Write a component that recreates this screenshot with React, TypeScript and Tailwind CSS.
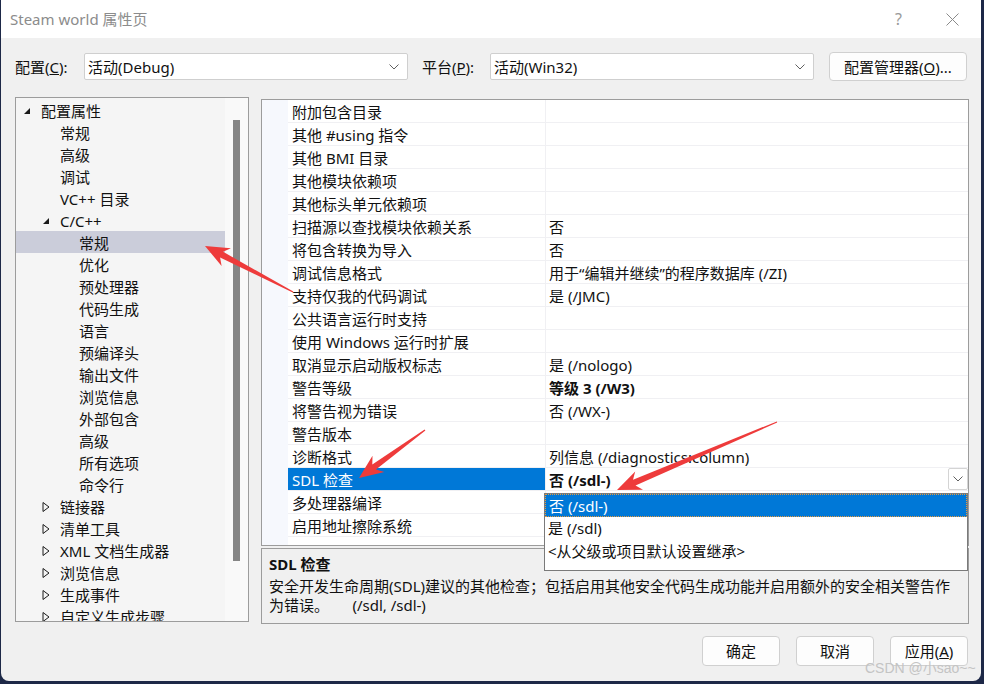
import React from "react";

type TreeItem = {
  label: string;
  level: number;
  kind: "open" | "closed" | "leaf";
  selected?: boolean;
};

const tree: TreeItem[] = [
  { label: "配置属性", level: 0, kind: "open" },
  { label: "常规", level: 1, kind: "leaf" },
  { label: "高级", level: 1, kind: "leaf" },
  { label: "调试", level: 1, kind: "leaf" },
  { label: "VC++ 目录", level: 1, kind: "leaf" },
  { label: "C/C++", level: 1, kind: "open" },
  { label: "常规", level: 2, kind: "leaf", selected: true },
  { label: "优化", level: 2, kind: "leaf" },
  { label: "预处理器", level: 2, kind: "leaf" },
  { label: "代码生成", level: 2, kind: "leaf" },
  { label: "语言", level: 2, kind: "leaf" },
  { label: "预编译头", level: 2, kind: "leaf" },
  { label: "输出文件", level: 2, kind: "leaf" },
  { label: "浏览信息", level: 2, kind: "leaf" },
  { label: "外部包含", level: 2, kind: "leaf" },
  { label: "高级", level: 2, kind: "leaf" },
  { label: "所有选项", level: 2, kind: "leaf" },
  { label: "命令行", level: 2, kind: "leaf" },
  { label: "链接器", level: 1, kind: "closed" },
  { label: "清单工具", level: 1, kind: "closed" },
  { label: "XML 文档生成器", level: 1, kind: "closed" },
  { label: "浏览信息", level: 1, kind: "closed" },
  { label: "生成事件", level: 1, kind: "closed" },
  { label: "自定义生成步骤", level: 1, kind: "closed" },
];

type Prop = { name: string; value?: string; bold?: boolean; selected?: boolean };

const props: Prop[] = [
  { name: "附加包含目录" },
  { name: "其他 #using 指令" },
  { name: "其他 BMI 目录" },
  { name: "其他模块依赖项" },
  { name: "其他标头单元依赖项" },
  { name: "扫描源以查找模块依赖关系", value: "否" },
  { name: "将包含转换为导入", value: "否" },
  { name: "调试信息格式", value: "用于“编辑并继续”的程序数据库 (/ZI)" },
  { name: "支持仅我的代码调试", value: "是 (/JMC)" },
  { name: "公共语言运行时支持" },
  { name: "使用 Windows 运行时扩展" },
  { name: "取消显示启动版权标志", value: "是 (/nologo)" },
  { name: "警告等级", value: "等级 3 (/W3)", bold: true },
  { name: "将警告视为错误", value: "否 (/WX-)" },
  { name: "警告版本" },
  { name: "诊断格式", value: "列信息 (/diagnostics:column)" },
  { name: "SDL 检查", value: "否 (/sdl-)", bold: true, selected: true },
  { name: "多处理器编译" },
  { name: "启用地址擦除系统" },
];

const font = { fontFamily: '"Noto Sans", "Noto Sans CJK SC", sans-serif' };

function Chevron({ className = "" }: { className?: string }) {
  return (
    <svg width="10" height="6" viewBox="0 0 10 6" className={className}>
      <path d="M0.5 0.5 L5 5 L9.5 0.5" fill="none" stroke="#606060" strokeWidth="1" />
    </svg>
  );
}

function TreeArrow({ kind }: { kind: TreeItem["kind"] }) {
  if (kind === "open")
    return (
      <svg width="8" height="8" viewBox="0 0 8 8">
        <path d="M7 1 L7 7 L1 7 Z" fill="#1a1a1a" />
      </svg>
    );
  if (kind === "closed")
    return (
      <svg width="8" height="10" viewBox="0 0 8 10">
        <path d="M1 0.5 L7 5 L1 9.5 Z" fill="none" stroke="#1a1a1a" strokeWidth="1" />
      </svg>
    );
  return null;
}

function Combo({ text }: { text: string }) {
  return (
    <div className="flex h-[27px] w-[324px] items-center justify-between rounded-[2px] border border-[#cfcfcf] bg-white pl-[3px] pr-[8px]">
      <span className="pt-[1px]">{text}</span>
      <Chevron />
    </div>
  );
}

// 红色标注箭头：尾部细、头部三角
function arrowPoints(x1: number, y1: number, x2: number, y2: number) {
  const len = Math.hypot(x2 - x1, y2 - y1);
  const dx = (x2 - x1) / len;
  const dy = (y2 - y1) / len;
  const nx = -dy;
  const ny = dx;
  const H = 24;
  const W = 10;
  const neck = [x2 - dx * H * 0.78, y2 - dy * H * 0.78];
  const wing = [x2 - dx * H, y2 - dy * H];
  const pts = [
    [x1 + nx * 0.6, y1 + ny * 0.6],
    [neck[0] + nx * 3.2, neck[1] + ny * 3.2],
    [wing[0] + nx * W, wing[1] + ny * W],
    [x2, y2],
    [wing[0] - nx * W, wing[1] - ny * W],
    [neck[0] - nx * 3.2, neck[1] - ny * 3.2],
    [x1 - nx * 0.6, y1 - ny * 0.6],
  ];
  return pts.map((p) => p.map((v) => v.toFixed(1)).join(",")).join(" ");
}

export default function App() {
  return (
    <div className="relative h-[684px] w-[984px] overflow-hidden bg-[#1d2847] text-[15px] text-[#111]" style={font}>
      <div className="ml-[1px] flex h-[681px] w-[980px] flex-col rounded-b-[8px] bg-[#f0f0f0]">
        {/* 标题栏 */}
        <div className="flex h-[38px] items-center justify-between bg-white pl-[9px] pr-[22px] text-[#8c8c8c]">
          <span>Steam world 属性页</span>
          <div className="flex items-center gap-[44px] text-[16px] text-[#9a9a9a]">
            <span>?</span>
            <svg width="13" height="13" viewBox="0 0 13 13">
              <path d="M0.5 0.5 L12.5 12.5 M12.5 0.5 L0.5 12.5" stroke="#8a8a8a" strokeWidth="1" />
            </svg>
          </div>
        </div>

        {/* 配置 / 平台 */}
        <div className="mt-[14px] flex h-[29px] items-center pl-[14px]">
          <span className="w-[69px] pt-[1px]">
            配置(<u>C</u>):
          </span>
          <Combo text="活动(Debug)" />
          <span className="ml-[14px] w-[68px] pt-[1px]">
            平台(<u>P</u>):
          </span>
          <Combo text="活动(Win32)" />
          <div className="ml-[15px] flex h-[29px] w-[138px] items-center justify-center rounded-[4px] border border-[#d0d0d0] bg-[#fdfdfd] pt-[1px]">
            配置管理器(<u>O</u>)...
          </div>
        </div>

        <div className="mt-[16px] flex">
          {/* 左侧树 */}
          <div className="ml-[14px] flex h-[525px] w-[234px] overflow-hidden border border-[#9c9c9c] bg-[#f5f5f5]">
            <div className="w-[209px] pt-[1px]">
              {tree.map((t, i) => (
                <div
                  key={i}
                  className={`flex h-[22px] items-center pt-[2px] ${t.selected ? "bg-[#cbcdda]" : ""}`}
                  style={{ paddingLeft: 7 + 19 * t.level }}
                >
                  <span className="flex w-[18px] items-center">
                    <TreeArrow kind={t.kind} />
                  </span>
                  <span className="whitespace-nowrap">{t.label}</span>
                </div>
              ))}
            </div>
            <div className="flex w-[23px] justify-center bg-[#f9f9f9] pt-[22px]">
              <div className="h-[441px] w-[7px] bg-[#858585]" />
            </div>
          </div>

          <div className="ml-[12px] flex flex-col">
            {/* 属性网格 */}
            <div className="mt-[2px] flex h-[447px] w-[708px] border border-[#9c9c9c] bg-white">
              <div className="w-[26px] bg-[#f6f8fd]" />
              <div className="flex-1">
                {props.map((p, i) => (
                  <div key={i} className="flex h-[23px] border-b border-[#f0f0f3]">
                    <div
                      className={`flex w-[258px] items-center border-r border-[#f0f0f3] pl-[4px] pt-[2px] ${
                        p.selected ? "bg-[#0078d7] text-white" : ""
                      }`}
                    >
                      {p.name}
                    </div>
                    <div className="flex flex-1 items-center justify-between pl-[3px]">
                      <span className={`pt-[2px] ${p.bold ? "font-bold" : ""}`}>{p.value ?? ""}</span>
                      {p.selected && (
                        <div className="flex h-[22px] w-[20px] items-center justify-center rounded-[2px] border border-[#d4d4d4] bg-white">
                          <Chevron />
                        </div>
                      )}
                    </div>
                  </div>
                ))}
              </div>
            </div>

            {/* 说明 */}
            <div className="mt-[2px] h-[76px] w-[708px] border border-[#9c9c9c] px-[7px] pt-[6px] leading-[19px]">
              <div className="font-bold">SDL 检查</div>
              <div className="mt-[3px]">
                安全开发生命周期(SDL)建议的其他检查；包括启用其他安全代码生成功能并启用额外的安全相关警告作
                <br />
                为错误。&nbsp;&nbsp;&nbsp;&nbsp;&nbsp;&nbsp;(/sdl, /sdl-)
              </div>
            </div>
          </div>
        </div>

        {/* 底部按钮 */}
        <div className="mt-[12px] flex justify-end gap-[16px] pr-[13px]">
          {["确定", "取消"].map((b) => (
            <div key={b} className="flex h-[30px] w-[78px] items-center justify-center rounded-[4px] border border-[#d0d0d0] bg-[#fdfdfd] pt-[1px]">
              {b}
            </div>
          ))}
          <div className="flex h-[30px] w-[78px] items-center justify-center rounded-[4px] border border-[#d0d0d0] bg-[#fdfdfd] pt-[1px]">
            应用(<u>A</u>)
          </div>
        </div>
      </div>

      {/* 下拉列表 */}
      <div className="absolute left-[544px] top-[493px] h-[78px] w-[424px] border border-[#7a7a7a] bg-white">
        <div className="flex h-[23px] items-center border border-dotted border-[#e89a3c] bg-[#0078d7] pl-[3px] pt-[1px] text-white">
          否 (/sdl-)
        </div>
        <div className="flex h-[22px] items-center pl-[3px] pt-[1px]">是 (/sdl)</div>
        <div className="flex h-[23px] items-center pl-[3px] pt-[1px]">&lt;从父级或项目默认设置继承&gt;</div>
      </div>

      {/* 水印 */}
      <div
        className="absolute left-[865px] top-[658px] text-[14px] text-[#c4c4c4]"
        style={{ fontFamily: '"Liberation Sans", "Noto Sans CJK SC", sans-serif' }}
      >
        CSDN @小sao~~
      </div>

      {/* 红色箭头 */}
      <svg className="pointer-events-none absolute left-0 top-0" width="984" height="684">
        <polygon points={arrowPoints(293, 292, 205, 246)} fill="#ee3b3b" />
        <polygon points={arrowPoints(425, 430, 359, 478)} fill="#ee3b3b" />
        <polygon points={arrowPoints(777, 422, 617, 490)} fill="#ee3b3b" />
      </svg>
    </div>
  );
}
